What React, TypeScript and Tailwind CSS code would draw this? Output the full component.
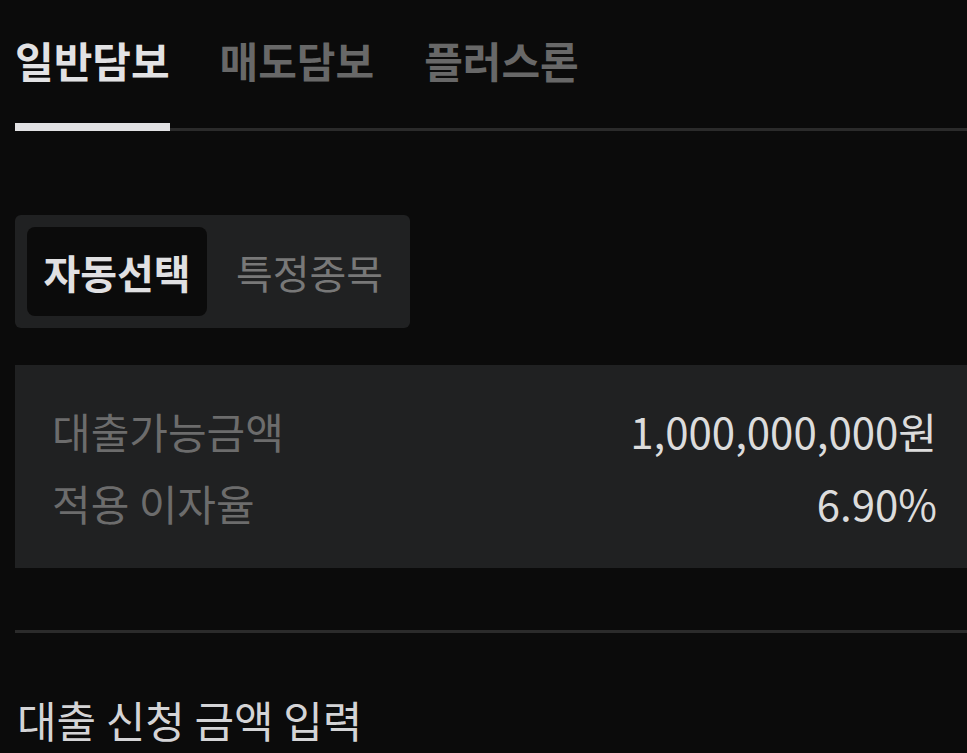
const font = { fontFamily: '"Noto Sans CJK KR", "Noto Sans", sans-serif' };

const tabs = ['일반담보', '매도담보', '플러스론'];

const rows = [
  { label: '대출가능금액', value: '1,000,000,000원' },
  { label: '적용 이자율', value: '6.90%' },
];

export default function App() {
  return (
    <div className="min-h-[753px] w-full bg-[#0b0b0b] pl-[15px]" style={font}>
      {/* Tabs */}
      <div className="flex h-[131px] items-end gap-[50px] border-b-[3px] border-[#2b2b2b]">
        {tabs.map((t, i) => (
          <div
            key={t}
            className={
              i === 0
                ? 'mb-[-3px] border-b-[8px] border-[#e2e2e4] pb-[38px] text-[42px] font-bold leading-[50px] text-[#e2e2e4]'
                : 'pb-[43px] text-[42px] font-bold leading-[50px] text-[#686868]'
            }
          >
            {t}
          </div>
        ))}
      </div>

      {/* Segment control */}
      <div className="mt-[84px] flex h-[113px] w-[395px] items-center rounded-[6px] bg-[#202122] p-[12px]">
        <div className="flex h-[89px] w-[180px] items-center justify-center rounded-[8px] bg-[#0b0b0b] text-[40px] font-bold text-[#e0e0e2]">
          자동선택
        </div>
        <div className="flex h-[89px] flex-1 items-center justify-center pl-[14px] text-[40px] text-[#787878]">
          특정종목
        </div>
      </div>

      {/* Info box */}
      <div className="mt-[37px] flex h-[203px] flex-col justify-center gap-[22px] bg-[#202122] pl-[37px] pr-[30px]">
        {rows.map((r) => (
          <div key={r.label} className="flex items-center justify-between text-[42px] leading-[50px]">
            <span className="text-[#6c6c6c]">{r.label}</span>
            <span className="text-[#dcdcdc]">{r.value}</span>
          </div>
        ))}
      </div>

      <div className="mt-[62px] h-[3px] bg-[#2b2b2b]" />

      <div className="mt-[60px] pl-[2px] text-[43px] leading-[52px] text-[#d4d4d6]">대출 신청 금액 입력</div>
    </div>
  );
}
